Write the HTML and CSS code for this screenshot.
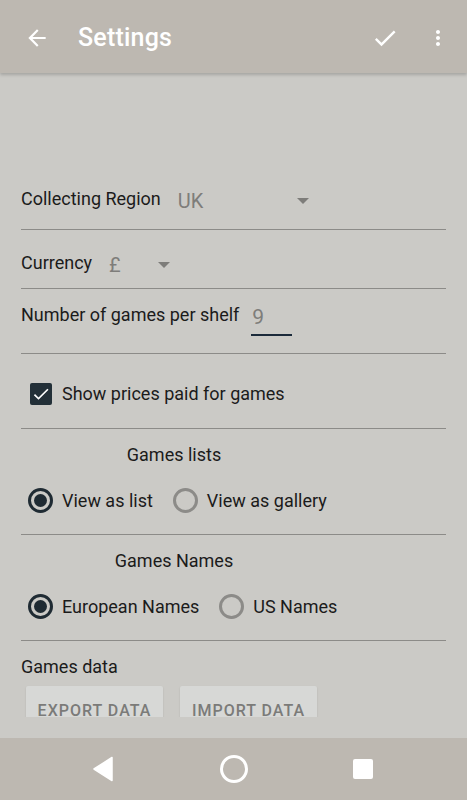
FILE: index.html
```html
<!DOCTYPE html>
<html lang="en">
<head>
    <meta charset="UTF-8">
    <meta name="viewport" content="width=device-width, initial-scale=1.0">
    <title>Settings</title>
    <link rel="stylesheet" href="styles.css">
</head>
<body>
    <div class="app">
        <!-- Toolbar -->
        <header class="toolbar">
            <svg class="tb-back" width="26" height="26" viewBox="0 0 24 24"><path d="M20 11H7.83l5.59-5.59L12 4l-8 8 8 8 1.41-1.41L7.83 13H20v-2z" fill="#fff"/></svg>
            <h1 class="tb-title">Settings</h1>
            <svg class="tb-check" width="28" height="28" viewBox="0 0 24 24"><path d="M9 16.17L4.83 12l-1.42 1.41L9 19 21 7l-1.41-1.41z" fill="#fff"/></svg>
            <svg class="tb-more" width="24" height="24" viewBox="0 0 24 24"><path d="M12 8c1.1 0 2-.9 2-2s-.9-2-2-2-2 .9-2 2 .9 2 2 2zm0 2c-1.1 0-2 .9-2 2s.9 2 2 2 2-.9 2-2-.9-2-2-2zm0 6c-1.1 0-2 .9-2 2s.9 2 2 2 2-.9 2-2-.9-2-2-2z" fill="#fff"/></svg>
        </header>

        <main class="content">
            <div class="scroll">
                <div class="row row-region">
                    <span class="label">Collecting Region</span>
                    <div class="spinner spinner-region">
                        <span class="value">UK</span>
                        <span class="arrow"></span>
                    </div>
                </div>

                <div class="row row-currency">
                    <span class="label">Currency</span>
                    <div class="spinner spinner-currency">
                        <span class="value">£</span>
                        <span class="arrow"></span>
                    </div>
                </div>

                <div class="row row-shelf">
                    <span class="label">Number of games per shelf</span>
                    <div class="num-input">9</div>
                </div>

                <div class="row row-check">
                    <span class="checkbox">
                        <svg width="20" height="20" viewBox="0 0 24 24"><path d="M9 16.17L4.83 12l-1.42 1.41L9 19 21 7l-1.41-1.41z" fill="#fff"/></svg>
                    </span>
                    <span class="label">Show prices paid for games</span>
                </div>

                <div class="row row-group">
                    <div class="group-title">Games lists</div>
                    <div class="radios">
                        <span class="radio checked"></span>
                        <span class="label">View as list</span>
                        <span class="radio"></span>
                        <span class="label">View as gallery</span>
                    </div>
                </div>

                <div class="row row-group">
                    <div class="group-title">Games Names</div>
                    <div class="radios">
                        <span class="radio checked"></span>
                        <span class="label">European Names</span>
                        <span class="radio"></span>
                        <span class="label">US Names</span>
                    </div>
                </div>

                <div class="row-data">
                    <div class="label">Games data</div>
                    <div class="buttons">
                        <button class="btn">Export data</button>
                        <button class="btn">Import data</button>
                    </div>
                </div>
            </div>
        </main>

        <!-- Navigation bar -->
        <nav class="navbar">
            <svg width="24" height="26" viewBox="0 0 24 26"><path d="M21 1.5 L21 24.5 L3 13 Z" fill="#fff" stroke="#fff" stroke-width="1.5" stroke-linejoin="round"/></svg>
            <svg width="30" height="30" viewBox="0 0 30 30"><circle cx="15" cy="15" r="12.5" fill="none" stroke="#fff" stroke-width="3"/></svg>
            <svg width="22" height="22" viewBox="0 0 22 22"><rect x="1" y="1" width="20" height="20" rx="2" fill="#fff"/></svg>
        </nav>
    </div>
</body>
</html>
```

FILE: styles.css
```css
body { margin: 0; font-family: Roboto, "Noto Sans", sans-serif; background: #cbcac6; color: #1b1b1b; }
.app { width: 467px; height: 800px; display: flex; flex-direction: column; overflow: hidden; }

.toolbar { height: 73px; flex: none; background: #bdb8b1; display: flex; align-items: center; box-shadow: 0 2px 3px rgba(0,0,0,0.18); position: relative; z-index: 1; }
.tb-back { margin-left: 24px; margin-top: 2px; }
.tb-title { margin: 2px 0 0 28px; flex: 1; font-size: 25px; font-weight: 500; color: #fff; letter-spacing: 0.2px; }
.tb-check { margin-right: 27px; margin-top: 2px; }
.tb-more { margin-right: 17px; margin-top: 2px; }

.content { flex: 1; padding-bottom: 21px; display: flex; flex-direction: column; min-height: 0; }
.scroll { flex: 1; overflow: hidden; padding: 114px 21px 0 21px; }

.label { font-size: 18px; line-height: 24px; }
.row { border-bottom: 1px solid #8c8b88; display: flex; align-items: center; }

.row-region { padding-bottom: 18px; }
.row-currency { padding: 21px 0 13px; }
.row-shelf { padding: 14px 0 17px; align-items: flex-start; }
.row-check { padding: 28px 0 22px 9px; }
.row-group { padding: 14px 0 21px; flex-direction: column; align-items: stretch; }

.spinner { display: flex; align-items: flex-start; height: 24px; color: #7e7d7a; font-size: 20px; }
.spinner .value { line-height: 28px; }
.spinner .arrow { align-self: center; width: 0; height: 0; border-left: 6px solid transparent; border-right: 6px solid transparent; border-top: 6px solid #7e7d7a; margin-top: 3px; }
.spinner-region { margin-left: 17px; }
.spinner-region .arrow { margin-left: 94px; }
.spinner-currency { margin-left: 17px; }
.spinner-currency .arrow { margin-left: 37px; }

.num-input { margin-left: 12px; width: 41px; height: 33px; box-sizing: border-box; border-bottom: 2px solid #1b2a3a; color: #7e7d7a; font-size: 21px; line-height: 28px; padding-left: 1px; }

.checkbox { width: 22px; height: 22px; border-radius: 2px; background: #233038; display: flex; align-items: center; justify-content: center; margin-right: 10px; }

.group-title { width: 306px; text-align: center; font-size: 18px; line-height: 24px; }
.radios { display: flex; align-items: center; margin-top: 21px; padding-left: 7px; }
.radio { width: 25px; height: 25px; box-sizing: border-box; border-radius: 50%; border: 3px solid #8c8b88; margin-right: 9px; display: flex; align-items: center; justify-content: center; }
.radio + .label + .radio { margin-left: 20px; }
.radio.checked { border-color: #1f2b33; }
.radio.checked::after { content: ""; width: 13px; height: 13px; border-radius: 50%; background: #1f2b33; }

.row-data { padding-top: 14px; }
.buttons { display: flex; gap: 17px; margin-top: 7px; padding-left: 5px; }
.btn { width: 137px; height: 48px; border: none; border-radius: 2px; background: #d7d8d6; color: #7b7b79; font-family: Roboto, sans-serif; font-size: 16px; font-weight: 500; text-transform: uppercase; letter-spacing: 1px; padding: 0; box-shadow: 0 1px 2px rgba(0,0,0,0.12); }

.navbar { height: 62px; flex: none; background: #bdb8b1; display: flex; align-items: center; justify-content: space-between; padding: 0 93px 0 91px; }
```
